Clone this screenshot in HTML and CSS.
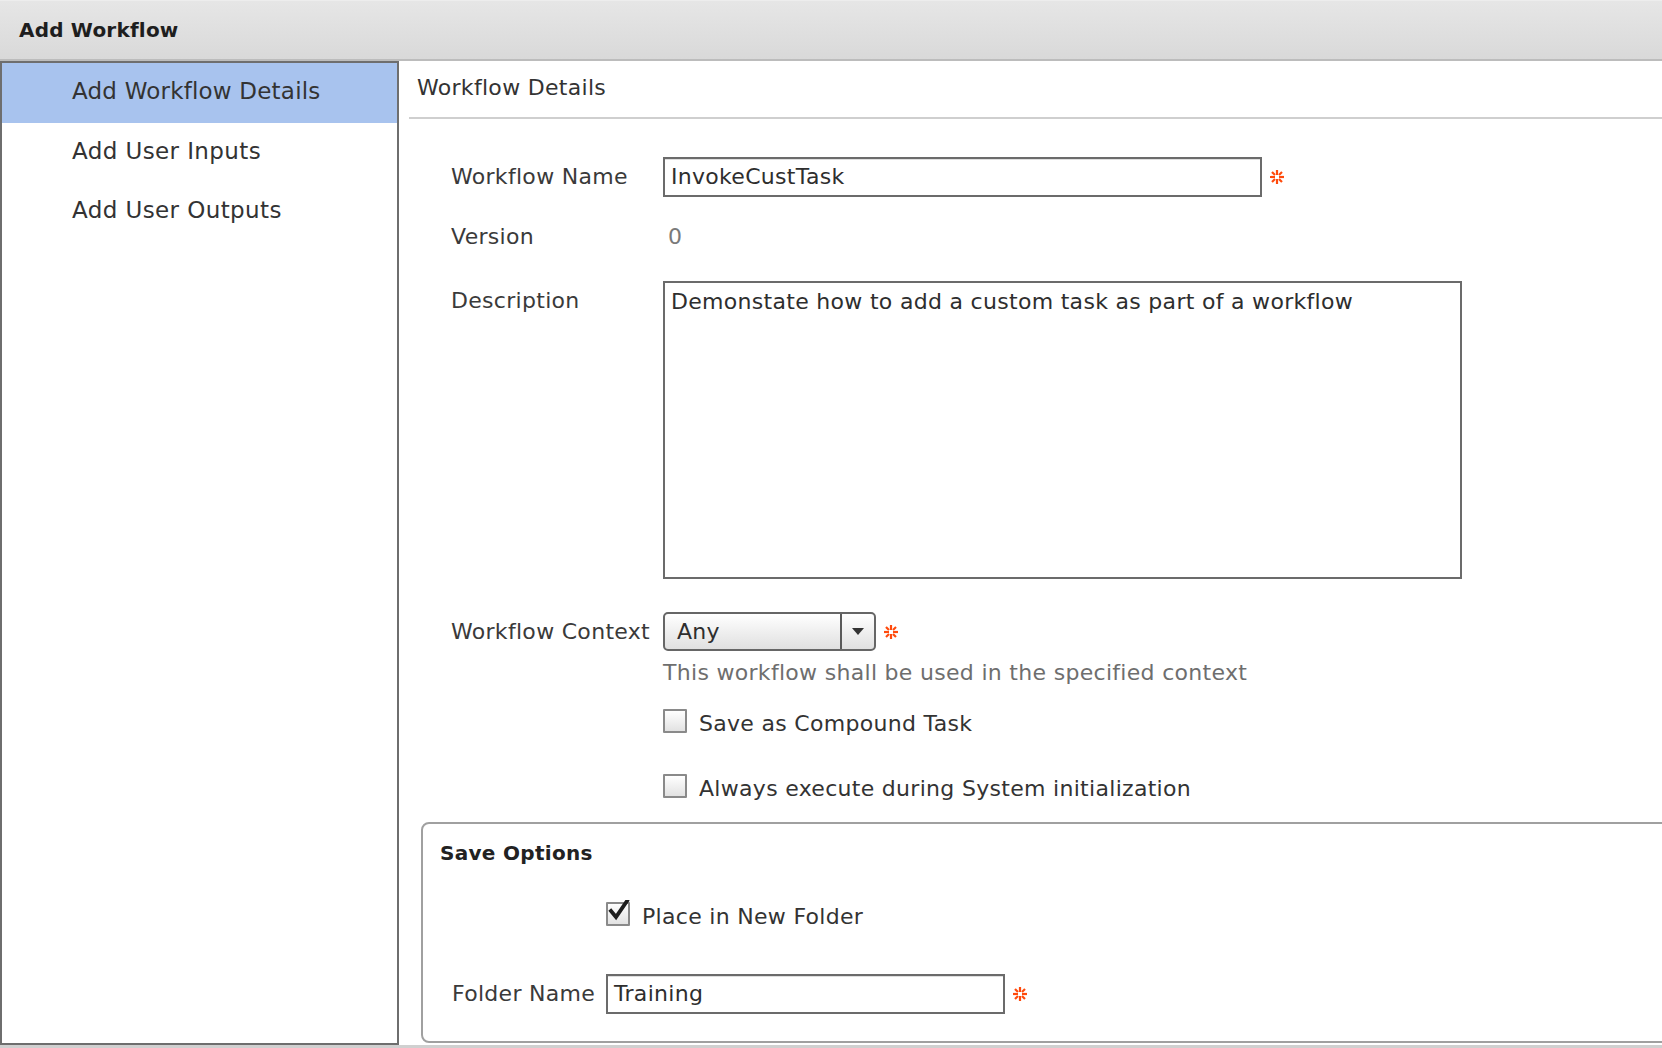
FILE: index.html
```html
<!DOCTYPE html>
<html lang="en">
<head>
<meta charset="utf-8">
<title>Add Workflow</title>
<link rel="stylesheet" href="styles.css">
</head>
<body>
<div class="page">
  <header class="titlebar">Add Workflow</header>
  <div class="main">
    <nav class="sidebar">
      <div class="nav-item active">Add Workflow Details</div>
      <div class="nav-item">Add User Inputs</div>
      <div class="nav-item">Add User Outputs</div>
    </nav>
    <section class="content">
      <div class="section-head">Workflow Details</div>
      <div class="form">
        <div class="row row-name">
          <label class="label">Workflow Name</label>
          <div class="field">
            <div class="input input-name">InvokeCustTask</div>
            <svg class="req" viewBox="0 0 14 14" width="14" height="14"><g stroke="#ff4a0c" stroke-width="2.2"><line x1="7" y1="0" x2="7" y2="5"/><line x1="7" y1="9" x2="7" y2="14"/><line x1="0" y1="7" x2="5" y2="7"/><line x1="9" y1="7" x2="14" y2="7"/><line x1="2" y1="2" x2="5" y2="5"/><line x1="12" y1="2" x2="9" y2="5"/><line x1="2" y1="12" x2="5" y2="9"/><line x1="12" y1="12" x2="9" y2="9"/></g></svg>
          </div>
        </div>
        <div class="row row-version">
          <label class="label">Version</label>
          <div class="field value">0</div>
        </div>
        <div class="row row-desc">
          <label class="label">Description</label>
          <div class="field">
            <div class="textarea">Demonstate how to add a custom task as part of a workflow</div>
          </div>
        </div>
        <div class="row row-context">
          <label class="label">Workflow Context</label>
          <div class="field">
            <div class="select">
              <span class="select-text">Any</span>
              <span class="select-btn"><svg viewBox="0 0 12 7" width="12" height="7"><path d="M0 0 L12 0 L6 7 Z" fill="#333"/></svg></span>
            </div>
            <svg class="req" viewBox="0 0 14 14" width="14" height="14"><g stroke="#ff4a0c" stroke-width="2.2"><line x1="7" y1="0" x2="7" y2="5"/><line x1="7" y1="9" x2="7" y2="14"/><line x1="0" y1="7" x2="5" y2="7"/><line x1="9" y1="7" x2="14" y2="7"/><line x1="2" y1="2" x2="5" y2="5"/><line x1="12" y1="2" x2="9" y2="5"/><line x1="2" y1="12" x2="5" y2="9"/><line x1="12" y1="12" x2="9" y2="9"/></g></svg>
          </div>
        </div>
        <div class="help">This workflow shall be used in the specified context</div>
        <div class="check-row check-first">
          <span class="checkbox"></span>
          <span class="check-label">Save as Compound Task</span>
        </div>
        <div class="check-row check-second">
          <span class="checkbox"></span>
          <span class="check-label">Always execute during System initialization</span>
        </div>
      </div>
      <div class="fieldset">
        <div class="legend">Save Options</div>
        <div class="check-row check-folder">
          <span class="checkbox checked"><svg viewBox="0 0 24 24" width="24" height="24"><path d="M5 11 L10 17 L21 1" fill="none" stroke="#1e1e1e" stroke-width="3.8" stroke-linecap="square"/></svg></span>
          <span class="check-label">Place in New Folder</span>
        </div>
        <div class="row row-folder">
          <label class="label label-folder">Folder Name</label>
          <div class="field">
            <div class="input input-folder">Training</div>
            <svg class="req" viewBox="0 0 14 14" width="14" height="14"><g stroke="#ff4a0c" stroke-width="2.2"><line x1="7" y1="0" x2="7" y2="5"/><line x1="7" y1="9" x2="7" y2="14"/><line x1="0" y1="7" x2="5" y2="7"/><line x1="9" y1="7" x2="14" y2="7"/><line x1="2" y1="2" x2="5" y2="5"/><line x1="12" y1="2" x2="9" y2="5"/><line x1="2" y1="12" x2="5" y2="9"/><line x1="12" y1="12" x2="9" y2="9"/></g></svg>
          </div>
        </div>
      </div>
    </section>
  </div>
  <div class="bottom-band"></div>
</div>
</body>
</html>
```

FILE: styles.css
```css
* { box-sizing: border-box; }
html, body { margin: 0; padding: 0; }
body {
  font-family: "DejaVu Sans", Verdana, sans-serif;
  color: #333;
  background: #fff;
  overflow: hidden;
  letter-spacing: 0.3px;
}
.page {
  width: 1662px;
  height: 1048px;
  display: flex;
  flex-direction: column;
  overflow: hidden;
}
.titlebar {
  height: 61px;
  line-height: 59px;
  padding-left: 19px;
  font-size: 20px;
  font-weight: bold;
  color: #1e1e1e;
  letter-spacing: 0.2px;
  background: linear-gradient(#e6e6e6, #d9d9d9);
  border-top: 1px solid #ededed;
  border-bottom: 2px solid #bcbcbc;
  flex: none;
}
.main {
  flex: 1;
  display: flex;
  min-height: 0;
}
.sidebar {
  width: 399px;
  flex: none;
  border: 2px solid #6e6e6e;
  background: #fff;
}
.nav-item {
  height: 59px;
  line-height: 57px;
  padding-left: 70px;
  font-size: 23px;
  color: #333;
  letter-spacing: 0.4px;
}
.nav-item.active {
  height: 60px;
  background: #a8c3ee;
  letter-spacing: 0.2px;
}
.content {
  flex: 1;
  padding-left: 10px;
  min-width: 0;
}
.section-head {
  height: 58px;
  line-height: 54px;
  padding-left: 8px;
  font-size: 22px;
  color: #333;
  border-bottom: 2px solid #cfcfcf;
}
.form {
  padding-left: 42px;
}
.row {
  display: flex;
  align-items: flex-start;
}
.label {
  width: 212px;
  flex: none;
  font-size: 22px;
  line-height: 40px;
  color: #3a3a3a;
}
.field {
  display: flex;
  align-items: center;
}
.row-name { margin-top: 38px; }
.row-version { margin-top: 20px; }
.row-desc { margin-top: 24px; }
.row-context { margin-top: 33px; }
.value {
  font-size: 22px;
  line-height: 40px;
  color: #7a7a7a;
  padding-left: 5px;
}
.input {
  height: 40px;
  border: 2px solid #6b6b6b;
  box-shadow: inset 0 1px 0 #dedede;
  font-size: 22px;
  line-height: 36px;
  padding-left: 6px;
  color: #2e2e2e;
  background: #fff;
}
.input-name { width: 599px; }
.req { margin-left: 8px; flex: none; }
.textarea {
  width: 799px;
  height: 298px;
  border: 2px solid #6b6b6b;
  font-size: 22px;
  line-height: 26px;
  padding: 6px 6px;
  color: #2e2e2e;
}
.select {
  width: 213px;
  height: 39px;
  border: 2px solid #666;
  border-radius: 5px;
  background: linear-gradient(#ffffff, #e0e0e0);
  display: flex;
  align-items: stretch;
}
.select-text {
  flex: 1;
  font-size: 22px;
  line-height: 35px;
  padding-left: 12px;
  color: #2e2e2e;
}
.select-btn {
  width: 34px;
  border-left: 2px solid #5a5a5a;
  display: flex;
  align-items: center;
  justify-content: center;
}
.help {
  margin-top: 7px;
  margin-left: 212px;
  font-size: 22px;
  line-height: 28px;
  color: #6e6e6e;
}
.check-row {
  display: flex;
  align-items: center;
  height: 28px;
}
.check-first { margin-top: 22px; margin-left: 212px; }
.check-second { margin-top: 37px; margin-left: 212px; }
.checkbox {
  width: 24px;
  height: 24px;
  flex: none;
  border: 2px solid #8a8a8a;
  border-radius: 1px;
  background: linear-gradient(#ffffff, #e2e2e2);
  position: relative;
  margin-top: -4px;
}
.checkbox.checked svg {
  position: absolute;
  left: -2px;
  top: -4px;
}
.check-label {
  margin-left: 12px;
  font-size: 22px;
  color: #333;
}
.fieldset {
  margin-top: 20px;
  margin-left: 12px;
  margin-right: -20px;
  height: 221px;
  border: 2px solid #a0a0a0;
  border-radius: 8px;
  padding-top: 14px;
}
.legend {
  padding-left: 17px;
  font-size: 20px;
  font-weight: bold;
  line-height: 30px;
  color: #222;
  letter-spacing: 0.3px;
}
.check-folder { margin-top: 34px; margin-left: 183px; }
.check-folder .check-label { margin-left: 12px; }
.row-folder { margin-top: 44px; padding-left: 29px; }
.label-folder { width: 154px; }
.input-folder { width: 399px; }
.bottom-band {
  height: 3px;
  background: #d0d0d0;
  flex: none;
}
```
